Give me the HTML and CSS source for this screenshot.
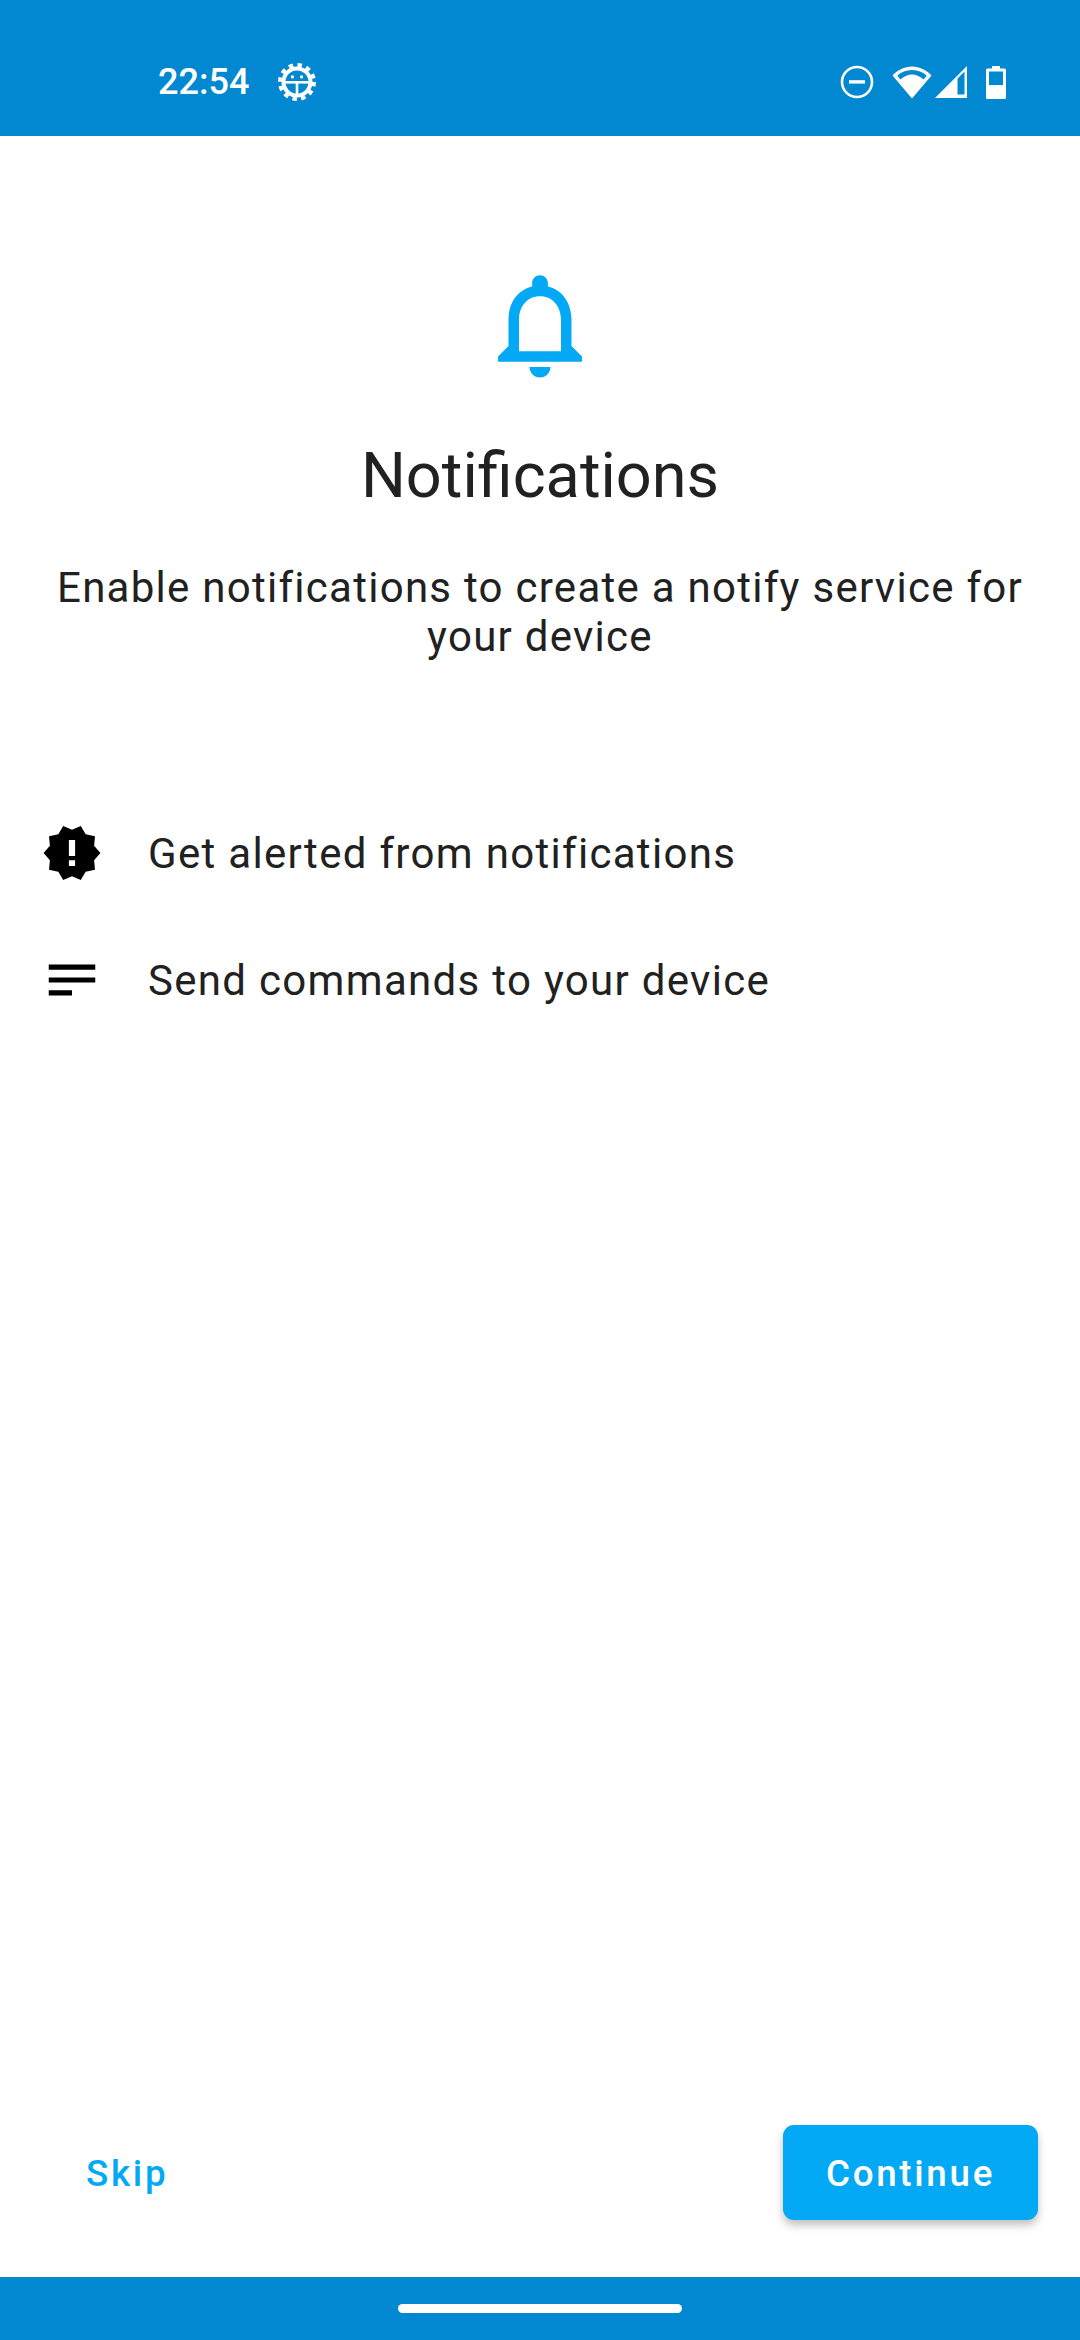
FILE: index.html
```html
<!DOCTYPE html>
<html lang="en">
<head>
    <meta charset="utf-8" />
    <meta name="viewport" content="width=device-width, initial-scale=1.0">
    <title>Notifications</title>
    <link rel="stylesheet" href="styles.css">
</head>
<body>
<div class="screen">
    <div class="statusbar">
        <div class="status-left">
            <span class="clock">22:54</span>
            <!-- debug cog: dashed circle gives the teeth -->
            <svg class="cog" viewBox="0 0 38 38">
                <circle cx="19" cy="19" r="16.500" fill="none" stroke="#fff" stroke-width="5" stroke-dasharray="4.320 4.320"/>
                <circle cx="19" cy="19" r="13.500" fill="none" stroke="#fff" stroke-width="4"/>
                <rect x="7" y="18" width="24" height="2.600" fill="#fff"/>
                <rect x="17.700" y="18" width="2.600" height="14" fill="#fff"/>
                <rect x="13" y="12.500" width="2.800" height="2.800" fill="#fff"/>
                <rect x="22.200" y="12.500" width="2.800" height="2.800" fill="#fff"/>
            </svg>
        </div>
        <div class="status-right">
            <svg class="dnd" viewBox="0 0 34 34">
                <circle cx="17" cy="17" r="15" fill="none" stroke="#fff" stroke-width="2.600"/>
                <rect x="9" y="15.200" width="16" height="3.400" fill="#fff"/>
            </svg>
            <svg class="wifi" viewBox="0 0 40 34">
                <path fill="#fff" d="M20 33.500L.5 10.500C5.500 5 12.500 1.500 20 1.500s14.500 3.500 19.500 9zM20 5C14 5 9 7.200 5.300 10.800l3.200 3.800C11.500 11.500 15.500 9.500 20 9.500s8.500 2 11.500 5.100l3.200-3.800C31 7.200 26 5 20 5z" fill-rule="evenodd"/>
            </svg>
            <svg class="signal" viewBox="0 0 32 32">
                <path fill="#fff" fill-rule="evenodd" d="M32 0v32H0zM29.500 5.500L22.500 12.500V28.500H29.500z"/>
            </svg>
            <svg class="battery" viewBox="0 0 20 33">
                <path fill="#fff" fill-rule="evenodd" d="M6 0h8v2.500h4.500A1.500 1.500 0 0 1 20 4v27.500a1.500 1.500 0 0 1-1.500 1.500h-17A1.500 1.500 0 0 1 0 31.500V4a1.500 1.500 0 0 1 1.500-1.500H6zM3 5.500V19h14V5.500z"/>
            </svg>
        </div>
    </div>

    <div class="content">
        <svg class="hero-icon" viewBox="0 0 24 24">
            <path d="M12 22c1.100 0 2-.9 2-2h-4c0 1.100.9 2 2 2zm6-6v-5c0-3.070-1.630-5.640-4.500-6.320V4c0-.83-.67-1.500-1.500-1.500s-1.500.67-1.500 1.500v.68C7.640 5.360 6 7.920 6 11v5l-2 2v1h16v-1l-2-2zm-2 1H8v-6c0-2.480 1.510-4.500 4-4.500s4 2.020 4 4.500v6z"/>
        </svg>
        <h1 class="title">Notifications</h1>
        <p class="desc">Enable notifications to create a notify service for your device</p>

        <ul class="features">
            <li class="feature">
                <svg class="feature-icon" viewBox="0 0 24 24">
                    <path d="M23,12L20.560,9.220L20.900,5.540L17.290,4.720L15.400,1.540L12,3L8.600,1.540L6.710,4.720L3.100,5.530L3.440,9.210L1,12L3.440,14.780L3.100,18.470L6.710,19.290L8.600,22.470L12,21L15.400,22.460L17.290,19.280L20.900,18.460L20.560,14.780L23,12M13.200,17H10.800V14.800H13.200V17M13.200,13.200H10.800V7H13.200V13.200Z"/>
                </svg>
                <span>Get alerted from notifications</span>
            </li>
            <li class="feature">
                <svg class="feature-icon" viewBox="0 0 24 24">
                    <path d="M21,6V8H3V6H21M3,18H12V16H3V18M3,13H21V11H3V13Z"/>
                </svg>
                <span>Send commands to your device</span>
            </li>
        </ul>
    </div>

    <div class="actions">
        <button class="btn-skip">Skip</button>
        <button class="btn-continue">Continue</button>
    </div>

    <div class="navbar">
        <div class="nav-pill"></div>
    </div>
</div>
</body>
</html>
```

FILE: styles.css
```css
* {
    box-sizing: border-box;
}
body {
    margin: 0;
    background: #fff;
    font-family: Roboto, "Liberation Sans", sans-serif;
}
.screen {
    width: 1080px;
    height: 2340px;
    display: flex;
    flex-direction: column;
    overflow: hidden;
}

/* status bar */
.statusbar {
    height: 136px;
    flex: none;
    background: #0288d1;
    display: flex;
    justify-content: space-between;
    align-items: center;
    padding: 28px 74px 0 158px;
}
.status-left, .status-right {
    display: flex;
    align-items: center;
}
.clock {
    color: #fff;
    font-size: 36px;
    font-weight: 500;
}
.cog {
    width: 38px;
    height: 38px;
    margin-left: 29px;
}
.dnd {
    width: 34px;
    height: 34px;
}
.wifi {
    width: 40px;
    height: 34px;
    margin-left: 18px;
}
.signal {
    width: 32px;
    height: 32px;
    margin-left: 3px;
}
.battery {
    width: 20px;
    height: 33px;
    margin-left: 19px;
}

/* main block */
.content {
    flex: 1;
    display: flex;
    flex-direction: column;
    align-items: center;
    padding-top: 126px;
}
.hero-icon {
    width: 126px;
    height: 126px;
    fill: #03a9f4;
}
.title {
    margin: 48px 0 0;
    font-size: 63px;
    font-weight: 400;
    line-height: 80px;
    color: #212121;
}
.desc {
    margin: 47px 0 0;
    padding: 0 40px;
    text-align: center;
    font-size: 42px;
    line-height: 49px;
    letter-spacing: 1.270px;
    color: #212121;
}
.features {
    list-style: none;
    margin: 161px 0 0;
    padding: 0 0 0 41px;
    align-self: stretch;
    display: flex;
    flex-direction: column;
    gap: 65px;
}
.feature {
    display: flex;
    align-items: center;
    gap: 45px;
    font-size: 42px;
    letter-spacing: 1.310px;
    color: #212121;
}
.feature-icon {
    width: 62px;
    height: 62px;
    fill: #000;
    flex: none;
}

/* bottom buttons */
.actions {
    flex: none;
    display: flex;
    justify-content: space-between;
    align-items: center;
    padding: 0 42px 57px 86px;
}
.actions button {
    border: 0;
    padding: 2px 0 0;
    font-family: inherit;
    font-size: 36.750px;
    font-weight: 500;
    letter-spacing: 2.700px;
}
.btn-skip {
    background: none;
    color: #03a9f4;
}
.btn-continue {
    width: 255px;
    height: 95px;
    background: #03a9f4;
    color: #fff;
    border-radius: 11px;
    box-shadow: 0 5px 8px rgba(0, 0, 0, .25);
}

.navbar {
    height: 63px;
    flex: none;
    background: #0288d1;
    display: flex;
    justify-content: center;
    align-items: center;
    padding-bottom: 1px;
}
.nav-pill {
    width: 284px;
    height: 9px;
    border-radius: 5px;
    background: #fff;
}
```
